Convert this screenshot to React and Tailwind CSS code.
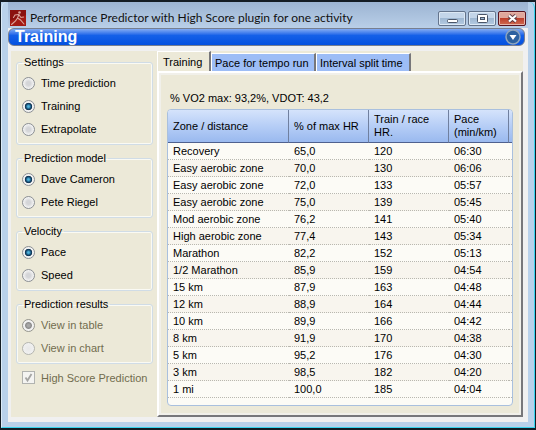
import { useState } from "react";
import { clsx } from "clsx";

const groups = [
  { title: "Settings", options: ["Time prediction", "Training", "Extrapolate"], selected: "Training" },
  { title: "Prediction model", options: ["Dave Cameron", "Pete Riegel"], selected: "Dave Cameron" },
  { title: "Velocity", options: ["Pace", "Speed"], selected: "Pace" },
  { title: "Prediction results", options: ["View in table", "View in chart"], selected: "View in table", disabled: true },
];

const tabs = ["Training", "Pace for tempo run", "Interval split time"];

const rows = [
  ["Recovery", "65,0", "120", "06:30"],
  ["Easy aerobic zone", "70,0", "130", "06:06"],
  ["Easy aerobic zone", "72,0", "133", "05:57"],
  ["Easy aerobic zone", "75,0", "139", "05:45"],
  ["Mod aerobic zone", "76,2", "141", "05:40"],
  ["High aerobic zone", "77,4", "143", "05:34"],
  ["Marathon", "82,2", "152", "05:13"],
  ["1/2 Marathon", "85,9", "159", "04:54"],
  ["15 km", "87,9", "163", "04:48"],
  ["12 km", "88,9", "164", "04:44"],
  ["10 km", "89,9", "166", "04:42"],
  ["8 km", "91,9", "170", "04:38"],
  ["5 km", "95,2", "176", "04:30"],
  ["3 km", "98,5", "182", "04:20"],
  ["1 mi", "100,0", "185", "04:04"],
];

function AppIcon() {
  return (
    <svg width="16" height="16" viewBox="0 0 16 16" aria-hidden="true">
      <rect width="16" height="16" fill="#a31a14" />
      <path d="M0 0h16v5L0 11z" fill="#8a1210" />
      <g fill="none" stroke="#dba69e" strokeWidth="1.1" strokeLinecap="round">
        <path d="M9 4.500 7.500 8l3 2 3.500 4M7.500 8l-2 3-4 3.500" />
        <path d="M8.500 4.500 5 5 3.500 7.500M9 5l2 2.500 2.500-.5" />
      </g>
      <circle cx="9.500" cy="2.500" r="1.300" fill="#dba69e" />
    </svg>
  );
}

function CaptionButton({ label, close, children }) {
  return (
    <button
      type="button"
      aria-label={label}
      className={clsx(
        "flex h-[15px] w-7 items-center justify-center rounded-[2px] border",
        close
          ? "border-[#5a1420] bg-linear-to-b from-[#dfa79c] from-45% via-[#bd3f2c] via-50% to-[#cf6a52] shadow-[inset_0_0_0_1px_#e5b3a8]"
          : "border-[#64748c] bg-linear-to-b from-[#c3d5e9] from-45% via-[#9fb8d3] via-50% to-[#b5cbe2] shadow-[inset_0_0_0_1px_#dce8f4]"
      )}
    >
      <svg width="13" height="11" viewBox="0 0 13 11" aria-hidden="true">{children}</svg>
    </button>
  );
}

function TitleBar() {
  return (
    <header className="flex h-[26px] items-center bg-linear-to-b from-[#9cb4d2] to-[#b9cfe8] px-0.5 pt-1.5">
      <AppIcon />
      <h1 className="ml-1 min-w-0 flex-1 truncate font-['Lato','Open_Sans',sans-serif] text-[12px] leading-4 text-[#111]">
        Performance Predictor with High Score plugin for one activity
      </h1>
      <div className="flex gap-0.5">
        <CaptionButton label="Minimize">
          <rect x="1.500" y="6.500" width="10" height="3" rx="1" fill="#fff" stroke="#4a5568" />
        </CaptionButton>
        <CaptionButton label="Maximize">
          <rect x="1.500" y="1.500" width="10" height="8" rx="1" fill="#fff" stroke="#4a5568" />
          <rect x="4.500" y="4.500" width="4" height="2" fill="#9fb8d3" stroke="#4a5568" />
        </CaptionButton>
        <CaptionButton label="Close" close>
          <path d="M3 2.500 10 8.500M10 2.500 3 8.500" stroke="#5b3a42" strokeWidth="4" />
          <path d="M3 2.500 10 8.500M10 2.500 3 8.500" stroke="#fff" strokeWidth="2.300" />
        </CaptionButton>
      </div>
    </header>
  );
}

function Banner() {
  return (
    <div className="mr-[3px] flex h-[18px] items-center justify-between rounded-md border border-[#777f90] bg-linear-to-b from-[#83abf2] via-[#1460e8] via-40% to-[#0450e0] pr-[3px] pl-1.5">
      <h2 className="text-[16px] leading-4 font-bold text-white">Training</h2>
      <button type="button" aria-label="Choose view">
        <svg width="16" height="16" viewBox="0 0 16 16" aria-hidden="true">
          <circle cx="8" cy="8" r="7" fill="#2d61a0" stroke="#8fa5bd" strokeWidth="1.500" />
          <path d="M4.500 6h7L8 11z" fill="#fff" />
        </svg>
      </button>
    </div>
  );
}

function OptionGroup({ title, options, selected, disabled }) {
  const [value, setValue] = useState(selected);
  return (
    <fieldset
      disabled={disabled}
      className="rounded-[3px] border border-[#d0dce6] px-[5px] pt-0.5 pb-[3px] shadow-[inset_0_0_0_1px_#fafaf4]"
    >
      <legend className="px-0.5 leading-4">{title}</legend>
      {options.map((option) => (
        <label key={option} className={clsx("flex h-[23px] items-center gap-1.5", disabled && "text-[#716c4e]")}>
          <input
            type="radio"
            name={title}
            checked={value === option}
            onChange={() => setValue(option)}
            className="size-[13px] appearance-none rounded-full border border-[#8b8f94] bg-[radial-gradient(circle,#d4d5d8_0_25%,#f2f2f2_65%)] checked:bg-[radial-gradient(circle_at_50%_50%,#4fb4de_0_10%,#12486e_34%,#12324e_44%,#f2f2f2_52%)] disabled:border-[#b4b5b0] disabled:bg-[radial-gradient(circle,#e8e8e8,#f4f4f4)] disabled:checked:border-[#96968f] disabled:checked:bg-[radial-gradient(circle,#a8a8a8_0_15%,#8a8a8a_38%,#f2f2f2_50%)]"
          />
          {option}
        </label>
      ))}
    </fieldset>
  );
}

function Sidebar() {
  return (
    <aside className="flex w-[146px] shrink-0 flex-col gap-[5px] bg-[#ece9d8] pt-[3px] pr-1 pl-[5px]">
      {groups.map((group) => (
        <OptionGroup key={group.title} {...group} />
      ))}
      <label className="mt-0.5 flex items-center gap-1.5 pl-1.5 leading-3 whitespace-nowrap text-[#716c4e]">
        <span className="grid">
          <input
            type="checkbox"
            defaultChecked
            disabled
            className="col-start-1 row-start-1 size-[13px] appearance-none border border-[#b1b3b0] bg-[#f4f4f2]"
          />
          <svg className="col-start-1 row-start-1" width="13" height="13" viewBox="0 0 13 13" aria-hidden="true">
            <path d="M3.500 6.500 5.500 9.500 9.500 3" fill="none" stroke="#a5a5a3" strokeWidth="1.800" />
          </svg>
        </span>
        High Score Prediction
      </label>
    </aside>
  );
}

function ZoneTable() {
  const head = "border-b border-[#4f618f] pl-[5px] text-left font-normal leading-[13px]";
  const divider = "border-r border-r-[#70809f]";
  return (
    <div className="overflow-hidden rounded-[4px] border border-[#a9c0de] bg-[#fcfbf6] pb-[7px]">
      <table className="w-full table-fixed border-separate border-spacing-0">
        <colgroup>
          <col />
          <col className="w-20" />
          <col className="w-20" />
          <col className="w-[60px]" />
          <col className="w-[3px]" />
        </colgroup>
        <thead className="bg-linear-to-b from-[#d5e3fb] via-[#b5cdf6] via-50% to-[#98b8ee]">
          <tr className="h-[33px]">
            <th className={clsx(head, divider)}>Zone / distance</th>
            <th className={clsx(head, divider)}>% of max HR</th>
            <th className={clsx(head, divider)}>Train / race<br />HR.</th>
            <th className={clsx(head, divider)}>Pace<br />(min/km)</th>
            <td className="border-b border-[#4f618f]" />
          </tr>
        </thead>
        <tbody>
          {rows.map((row, i) => (
            <tr key={i} className="h-[17px] even:bg-[#f8f5ee]">
              {row.map((cell, j) => (
                <td key={j} className="border-b border-dotted border-[#b9b8b0] pl-[5px] leading-4">{cell}</td>
              ))}
              <td className="border-b border-dotted border-[#b9b8b0]" />
            </tr>
          ))}
        </tbody>
      </table>
    </div>
  );
}

function TabPanel() {
  const [active, setActive] = useState(0);
  return (
    <main className="flex min-w-0 flex-1 flex-col">
      <div role="tablist" className="flex h-5 items-end bg-[#ece9d8]">
        {tabs.map((tab, i) => (
          <button
            key={tab}
            type="button"
            role="tab"
            aria-selected={i === active}
            onClick={() => setActive(i)}
            className={clsx(
              "border-t border-r-2 border-l border-t-white border-r-[#77777a] border-l-white px-[3px] text-left leading-4 whitespace-nowrap",
              i === active ? "h-5 bg-[#ece9d8] pl-[5px]" : "h-[18px] bg-[#9dbdf6]",
              i === 0 && "w-[54px]",
              i === 1 && "w-[105px]",
              i === 2 && "w-[95px]"
            )}
          >
            {tab}
          </button>
        ))}
      </div>
      <section className="flex-1 border-2 border-t-white border-r-[#77777a] border-b-[#77777a] border-l-white bg-[#ece9d8]">
        <div className="h-full border-2 border-[#f1f0ea] px-1.5 pt-[15px] pb-1.5">
          <p className="mb-[3px] pl-[3px] leading-4">% VO2 max: 93,2%, VDOT: 43,2</p>
          <ZoneTable />
        </div>
      </section>
    </main>
  );
}

export default function App() {
  return (
    <div className="flex min-h-screen flex-col border-x border-t-2 border-b-2 border-[#141c24] bg-[#b9d1ea] font-['Liberation_Sans',Arial,sans-serif] text-[11px] text-black">
      <div className="flex flex-1 flex-col rounded-t-md border-x border-b border-l-[#dcebf7] border-r-[#38d4ee] border-b-[#38d4ee] px-1.5 pb-[5px]">
        <TitleBar />
        <div className="flex flex-1 flex-col bg-[#f0f0f0]">
          <Banner />
          <div className="flex flex-1 pt-[5px] pr-[5px] pb-[5px] pl-[3px]">
            <Sidebar />
            <TabPanel />
          </div>
        </div>
      </div>
    </div>
  );
}
